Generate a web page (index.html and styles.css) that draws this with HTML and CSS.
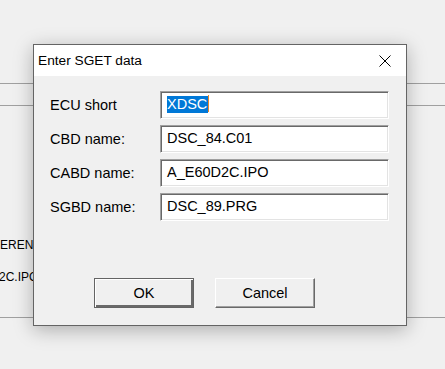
FILE: index.html
```html
<!DOCTYPE html>
<html lang="en">
<head>
  <meta charset="UTF-8">
  <title>Enter SGET data</title>
  <link rel="stylesheet" href="styles.css">
</head>
<body>

  <!-- Window behind the dialog -->
  <div class="backdrop">
    <div class="rule rule-top"></div>
    <div class="rule rule-second"></div>
    <div class="back-text back-one">EREN</div>
    <div class="back-text back-two">2C.IPO</div>
    <div class="rule rule-bottom"></div>
  </div>

  <!-- Dialog -->
  <div class="dialog">
    <div class="titlebar">
      <span class="title">Enter SGET data</span>
      <svg class="close" width="12" height="12" viewBox="0 0 12 12">
        <path d="M0.5 0.5 L11.5 11.5 M11.5 0.5 L0.5 11.5" stroke="#000" stroke-width="1" fill="none"/>
      </svg>
    </div>

    <div class="dialog-body">
      <div class="fields">
        <label>ECU short</label>
        <div class="field"><span class="selected">XDSC</span><span class="caret"></span></div>

        <label>CBD name:</label>
        <div class="field">DSC_84.C01</div>

        <label>CABD name:</label>
        <div class="field">A_E60D2C.IPO</div>

        <label>SGBD name:</label>
        <div class="field">DSC_89.PRG</div>
      </div>

      <div class="buttons">
        <div class="btn btn-default">OK</div>
        <div class="btn">Cancel</div>
      </div>
    </div>
  </div>

</body>
</html>
```

FILE: styles.css
```css
/* Basic Reset */
* {
  margin: 0;
  padding: 0;
  box-sizing: border-box;
}

body {
  font-family: 'Liberation Sans', Arial, sans-serif;
  font-size: 14.5px;
  background-color: #f0f0f0;
  color: #000;
  width: 445px;
  height: 369px;
  overflow: hidden;
  position: relative;
}

/* Background window */
.backdrop {
  padding-top: 83px;
}

.rule {
  height: 1px;
  background-color: #a0a0a0;
}

.rule-second {
  margin-top: 21px;
}

.back-text {
  font-size: 12px;
  line-height: 14px;
  white-space: nowrap;
}

.back-one {
  margin-top: 132px;
}

.back-two {
  margin-top: 18px;
  text-indent: -1px;
}

.rule-bottom {
  margin-top: 33px;
}

/* Dialog */
.dialog {
  position: absolute;
  left: 33px;
  top: 44px;
  width: 374px;
  height: 282px;
  border: 1px solid #646464;
  background-color: #f0f0f0;
  box-shadow: 0 4px 18px rgba(0, 0, 0, 0.28);
}

.titlebar {
  height: 31px;
  background-color: #fff;
  display: flex;
  align-items: center;
  justify-content: space-between;
  padding: 0 15px 0 4px;
}

.title {
  font-size: 13.7px;
}

.close {
  display: block;
}

.dialog-body {
  padding: 15px 0 0 16px;
}

.fields {
  display: grid;
  grid-template-columns: 110px 229px;
  grid-auto-rows: 28px;
  row-gap: 6px;
  align-items: center;
}

.field {
  height: 28px;
  background-color: #fff;
  border: 1px solid;
  border-color: #a0a0a0 #fff #fff #a0a0a0;
  box-shadow: inset 1px 1px 0 #696969, inset -1px -1px 0 #e3e3e3;
  padding: 0 0 0 6px;
  line-height: 25px;
  white-space: nowrap;
}

.selected {
  background-color: #0078d7;
  color: #fff;
  padding: 0 1px 1px 0;
}

.caret {
  display: inline-block;
  width: 1px;
  height: 17px;
  vertical-align: -3px;
  background-color: #e8862a;
}

/* Buttons */
.buttons {
  display: flex;
  gap: 21px;
  margin: 57px 0 0 44px;
}

.btn {
  width: 100px;
  height: 30px;
  line-height: 28px;
  text-align: center;
  background-color: #f0f0f0;
  border: 1px solid;
  border-color: #fff #696969 #696969 #fff;
  box-shadow: inset -1px -1px 0 #a0a0a0;
}

.btn-default {
  border-color: #646464;
  box-shadow: inset 1px 1px 0 #fff, inset -2px -2px 0 #696969;
}
```
